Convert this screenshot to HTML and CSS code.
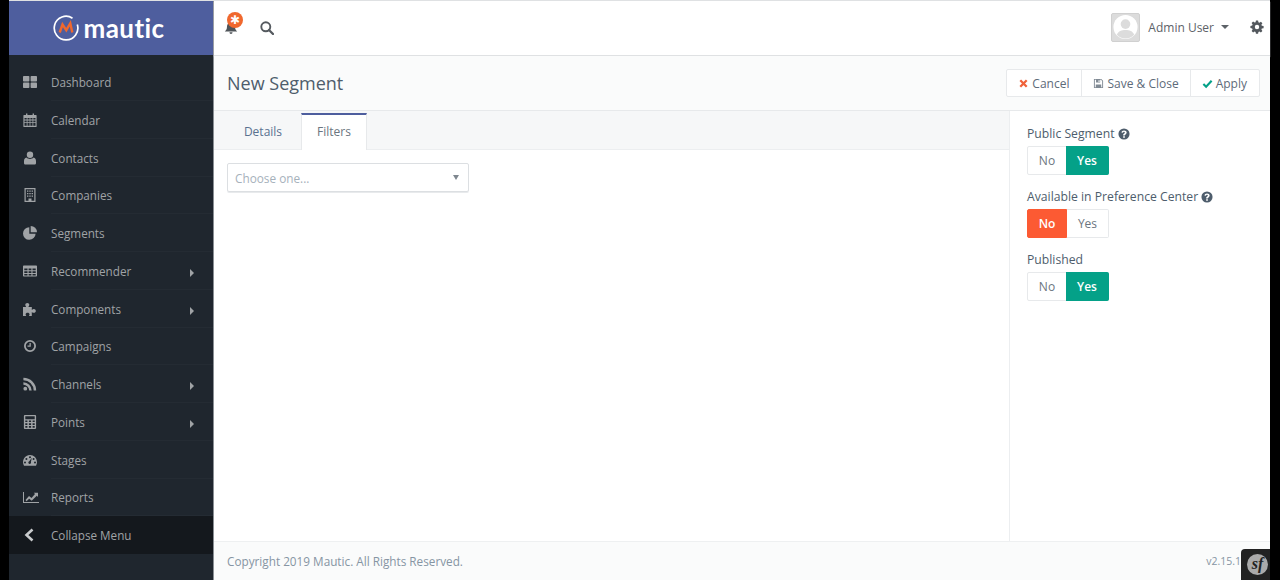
FILE: index.html
```html
<!DOCTYPE html>
<html lang="en">
<head>
<meta charset="utf-8">
<title>New Segment | Mautic</title>
<link rel="stylesheet" href="styles.css">
</head>
<body>
<svg class="sprite" width="0" height="0">
  <defs>
    <symbol id="i-dash" viewBox="0 0 14 14"><rect x="0" y="1" width="6.4" height="5.5" rx=".8"/><rect x="7.6" y="1" width="6.4" height="5.5" rx=".8"/><rect x="0" y="7.6" width="6.4" height="5.5" rx=".8"/><rect x="7.6" y="7.6" width="6.4" height="5.5" rx=".8"/></symbol>
    <symbol id="i-cal" viewBox="0 0 14 14"><path fill-rule="evenodd" d="M1 2h2V.5h1.4V2h5.2V.5H11V2h2a.6.6 0 0 1 .6.6v10.8a.6.6 0 0 1-.6.6H1a.6.6 0 0 1-.6-.6V2.600A.6.6 0 0 1 1 2zM1.500 5v1.600h2.200V5zm3 0v1.600h2.100V5zm2.900 0v1.600h2.100V5zm2.900 0v1.600h2.200V5zM1.500 7.400V9h2.200V7.400zm3 0V9h2.100V7.400zm2.900 0V9h2.100V7.400zm2.900 0V9h2.200V7.400zM1.500 9.800v2.900h2.200V9.800zm3 0v2.900h2.100V9.800zm2.900 0v2.900h2.100V9.800zm2.900 0v2.900h2.200V9.800z"/></symbol>
    <symbol id="i-user" viewBox="0 0 14 14"><circle cx="7" cy="3.800" r="3.200"/><path d="M3.400 6.600C4.400 7.700 5.600 8 7 8s2.600-.3 3.600-1.400c1.500.3 2.400 1.600 2.400 3.700v1.600c0 1-.7 1.600-1.600 1.600H2.600c-.9 0-1.600-.6-1.600-1.600v-1.600c0-2.100.9-3.400 2.400-3.700z"/></symbol>
    <symbol id="i-bld" viewBox="0 0 14 14"><path fill-rule="evenodd" d="M1.500 0h11v14h-11zM2.700 1.200v11.600h2.800v-2.300h3v2.300h2.800V1.200zM4 2.500h1.400v1.300H4zm2.300 0h1.400v1.300H6.300zm2.300 0H10v1.300H8.600zM4 5h1.400v1.300H4zm2.300 0h1.400v1.300H6.300zm2.300 0H10v1.300H8.600zM4 7.500h1.400v1.300H4zm2.300 0h1.400v1.300H6.300zm2.300 0H10v1.300H8.600z"/></symbol>
    <symbol id="i-pie" viewBox="0 0 14 14"><path d="M6.300 1.200A6.300 6.300 0 1 0 12.600 7.700H6.300z"/><path d="M7.700 0v6.300H14A6.300 6.300 0 0 0 7.700 0z"/></symbol>
    <symbol id="i-table" viewBox="0 0 14 14"><path fill-rule="evenodd" d="M.8 1.500h12.400a.8.800 0 0 1 .8.800v9.400a.8.800 0 0 1-.8.800H.8a.8.800 0 0 1-.8-.8V2.300a.8.800 0 0 1 .8-.8zM1.300 4.600v1.700h3.200V4.600zm4.300 0v1.700h2.800V4.600zm3.900 0v1.700h3.200V4.600zM1.300 7.300V9h3.200V7.300zm4.300 0V9h2.800V7.300zm3.900 0V9h3.200V7.300zM1.300 10v1.400h3.200V10zm4.300 0v1.400h2.800V10zm3.900 0v1.400h3.200V10z"/></symbol>
    <symbol id="i-puzzle" viewBox="0 0 14 14"><path d="M0 5h3.200c-.6-1-.9-1.500-.9-2.200C2.300 1.700 3.200 1 4.300 1s2 .7 2 1.800c0 .7-.4 1.200-.9 2.200h3.400v2.900c.9-.6 1.300-.9 2.100-.9 1.100 0 1.900.8 1.900 1.900s-.8 1.900-1.900 1.900c-.8 0-1.200-.3-2.100-.9V14H5.900c.5-.8.700-1.200.7-1.800 0-.9-.9-1.500-2-1.500s-2 .6-2 1.500c0 .6.200 1 .7 1.800H0z"/></symbol>
    <symbol id="i-clock" viewBox="0 0 14 14"><path fill-rule="evenodd" d="M7 1a6 6 0 1 1 0 12A6 6 0 0 1 7 1zm0 1.800a4.200 4.200 0 1 0 0 8.400 4.200 4.200 0 0 0 0-8.400zM6.500 4h1.300v3.800H4.500V6.600h2z"/></symbol>
    <symbol id="i-rss" viewBox="0 0 14 14"><circle cx="2.300" cy="11.700" r="1.900"/><path d="M.4 5.300v2.500a6 6 0 0 1 5.800 5.800h2.500A8.400 8.400 0 0 0 .4 5.300z"/><path d="M.4 .8v2.500a10.400 10.400 0 0 1 10.300 10.300h2.500A12.800 12.800 0 0 0 .4.800z"/></symbol>
    <symbol id="i-calc" viewBox="0 0 14 14"><path fill-rule="evenodd" d="M1.800 0h10.400c.5 0 .9.400.9.900v12.200c0 .5-.4.900-.9.900H1.800a.9.900 0 0 1-.9-.9V.9c0-.5.400-.9.900-.9zM2.300 1.300v2.900h9.400V1.300zM2.300 5.400v1.700h2.100V5.400zm3.600 0v1.700h2.200V5.400zm3.700 0v1.700h2.100V5.400zM2.300 8.200v1.700h2.100V8.200zm3.600 0v1.700h2.200V8.200zm3.700 0v1.700h2.100V8.200zM2.300 11v1.700h2.100V11zm3.600 0v1.700h2.200V11zm3.700 0v1.700h2.100V11z"/></symbol>
    <symbol id="i-gauge" viewBox="0 0 14 14"><path fill-rule="evenodd" d="M7 2a7 7 0 0 1 7 7c0 1.300-.3 2.400-.9 3.400-.1.200-.3.300-.6.300H1.500c-.3 0-.5-.1-.6-.3A7 7 0 0 1 7 2zM7 3.300a1 1 0 1 0 0 2 1 1 0 0 0 0-2zM3.400 5a1 1 0 1 0 0 2 1 1 0 0 0 0-2zm7.200 0a1 1 0 1 0 0 2 1 1 0 0 0 0-2zM2 8.500a1 1 0 1 0 0 2 1 1 0 0 0 0-2zm10 0a1 1 0 1 0 0 2 1 1 0 0 0 0-2zM8.800 4.700 6.300 8.300a1.300 1.300 0 1 0 1.600.8z"/></symbol>
    <symbol id="i-line" viewBox="0 0 16 14"><path d="M0 2h1v10h15v1H0z"/><path d="M2.500 10 6 6l2.500 2L12 4l-1.200-1.200H15v4.100L13.800 5.700 8.700 10.800 6.200 8.700 3.500 11.300z"/></symbol>
    <symbol id="i-cog" viewBox="0 0 14 14"><path fill-rule="evenodd" d="M5.900.5h2.200l.3 1.800 1 .4 1.500-1 1.500 1.500-1 1.500.4 1 1.800.3v2.200l-1.800.3-.4 1 1 1.500-1.500 1.500-1.500-1-1 .4-.3 1.800H5.900l-.3-1.800-1-.4-1.500 1-1.500-1.500 1-1.500-.4-1L.4 8.100V5.900l1.800-.3.4-1-1-1.500 1.500-1.500 1.500 1 1-.4zM7 4.800a2.200 2.200 0 1 0 0 4.400 2.200 2.200 0 0 0 0-4.400z"/></symbol>
    <symbol id="i-help" viewBox="0 0 14 14"><path fill-rule="evenodd" d="M7 .5a6.500 6.500 0 1 1 0 13A6.500 6.500 0 0 1 7 .5zM6 9.700v1.700h2V9.700zM7 2.800c-1.700 0-2.800.9-3 2.400l1.800.4c.1-.7.500-1.100 1.200-1.100.6 0 1 .3 1 .8 0 .4-.2.700-.8 1.100C6.300 7 6 7.500 6 8.400v.4h2v-.3c0-.4.200-.6.800-1 .9-.6 1.300-1.300 1.300-2.200 0-1.500-1.300-2.500-3.100-2.500z"/></symbol>
  </defs>
</svg>
<div class="app">
  <aside class="sidebar">
    <div class="brand">
      <svg class="brand-mark" viewBox="0 0 26 26" width="26" height="26" aria-hidden="true">
        <path d="M19.500 3.200A11.800 11.800 0 1 0 24.300 9.500" fill="none" stroke="#fff" stroke-width="1.700"/>
        <path d="M6.700 17.500 9.500 9.500l3.800 5.700 4-7 2 9.300" fill="none" stroke="#f0682e" stroke-width="2.400"/>
      </svg>
      <span class="brand-name">mautic</span>
    </div>
    <nav class="nav">
      <a class="nav-item"><svg class="nav-icon"><use href="#i-dash"/></svg><span class="nav-label">Dashboard</span></a>
      <a class="nav-item"><svg class="nav-icon"><use href="#i-cal"/></svg><span class="nav-label">Calendar</span></a>
      <a class="nav-item"><svg class="nav-icon"><use href="#i-user"/></svg><span class="nav-label">Contacts</span></a>
      <a class="nav-item"><svg class="nav-icon"><use href="#i-bld"/></svg><span class="nav-label">Companies</span></a>
      <a class="nav-item"><svg class="nav-icon"><use href="#i-pie"/></svg><span class="nav-label">Segments</span></a>
      <a class="nav-item has-sub"><svg class="nav-icon"><use href="#i-table"/></svg><span class="nav-label">Recommender</span></a>
      <a class="nav-item has-sub"><svg class="nav-icon"><use href="#i-puzzle"/></svg><span class="nav-label">Components</span></a>
      <a class="nav-item"><svg class="nav-icon"><use href="#i-clock"/></svg><span class="nav-label">Campaigns</span></a>
      <a class="nav-item has-sub"><svg class="nav-icon"><use href="#i-rss"/></svg><span class="nav-label">Channels</span></a>
      <a class="nav-item has-sub"><svg class="nav-icon"><use href="#i-calc"/></svg><span class="nav-label">Points</span></a>
      <a class="nav-item"><svg class="nav-icon"><use href="#i-gauge"/></svg><span class="nav-label">Stages</span></a>
      <a class="nav-item"><svg class="nav-icon nav-icon-wide"><use href="#i-line"/></svg><span class="nav-label">Reports</span></a>
      <a class="nav-item nav-collapse"><svg class="nav-icon" viewBox="0 0 14 14"><path d="M9.500 1.500 3.500 7l6 5.500" fill="none" stroke="#c9cbcd" stroke-width="2.600"/></svg><span class="nav-label">Collapse Menu</span></a>
    </nav>
  </aside>
  <div class="main">
    <header class="topbar">
      <div class="top-left">
        <span class="bell">
          <svg viewBox="0 0 14 14" width="14" height="14" aria-hidden="true"><path d="M7 1.500c2.700 0 4 1.700 4 4 0 2.500.8 3.800 2.200 5H.8C2.200 9.300 3 8 3 5.500c0-2.300 1.300-4 4-4zM5.500 11.300h3c0 1-.6 1.700-1.500 1.700s-1.500-.7-1.500-1.700z"/></svg>
          <span class="bell-badge">✱</span>
        </span>
        <svg class="search" viewBox="0 0 14 14" width="14" height="14" aria-hidden="true"><circle cx="5.800" cy="5.800" r="4.500" fill="none" stroke="currentColor" stroke-width="1.900"/><path d="m9 9 4 4" stroke="currentColor" stroke-width="2.300" stroke-linecap="round"/></svg>
      </div>
      <div class="top-right">
        <span class="avatar"><svg viewBox="0 0 28 28" width="28" height="28" aria-hidden="true"><circle cx="14" cy="14" r="12.500" fill="#fff"/><circle cx="14" cy="11" r="5" fill="#dcdcdc"/><path d="M5 22c1.500-4 5-5 9-5s7.500 1 9 5c-2 2.500-5.500 4-9 4s-7-1.500-9-4z" fill="#dcdcdc"/></svg></span>
        <span class="user-name">Admin User</span>
        <span class="caret"></span>
        <svg class="cog"><use href="#i-cog"/></svg>
      </div>
    </header>
    <div class="page-head">
      <h1 class="page-title">New Segment</h1>
      <div class="btn-group">
        <button class="btn"><svg class="btn-icon" viewBox="0 0 12 12"><path d="M2.500 2.500l7 7m0-7-7 7" stroke="#f0623a" stroke-width="2.500" fill="none"/></svg>Cancel</button>
        <button class="btn"><svg class="btn-icon" viewBox="0 0 12 12"><path d="M1 1h8l2 2v8H1zM2 2v8h8V3.400L8.600 2zM3 7h6v3H3zM3.300 2v2.800h4.500V2zM6 2.500h1.200v1.800H6z" fill="#808a94" fill-rule="evenodd"/></svg>Save &amp; Close</button>
        <button class="btn"><svg class="btn-icon" viewBox="0 0 12 12"><path d="M1.500 6.500 4.500 9.500l6-6.500" stroke="#04a188" stroke-width="2.300" fill="none"/></svg>Apply</button>
      </div>
    </div>
    <div class="content">
      <section class="editor">
        <div class="tabs">
          <a class="tab">Details</a>
          <a class="tab tab-active">Filters</a>
        </div>
        <div class="editor-body">
          <div class="select"><span>Choose one...</span><i class="select-arrow"></i></div>
        </div>
      </section>
      <aside class="options">
        <div class="field">
          <div class="field-label">Public Segment <svg class="help"><use href="#i-help"/></svg></div>
          <div class="toggle"><span class="toggle-opt toggle-no">No</span><span class="toggle-opt toggle-yes on-green">Yes</span></div>
        </div>
        <div class="field">
          <div class="field-label">Available in Preference Center <svg class="help"><use href="#i-help"/></svg></div>
          <div class="toggle"><span class="toggle-opt toggle-no on-red">No</span><span class="toggle-opt toggle-yes">Yes</span></div>
        </div>
        <div class="field">
          <div class="field-label">Published</div>
          <div class="toggle"><span class="toggle-opt toggle-no">No</span><span class="toggle-opt toggle-yes on-green">Yes</span></div>
        </div>
      </aside>
    </div>
    <footer class="footer">
      <span>Copyright 2019 Mautic. All Rights Reserved.</span>
      <span class="version">v2.15.1</span>
    </footer>
    <div class="sf-toolbar"><span class="sf-logo">sf</span></div>
  </div>
</div>
</body>
</html>
```
FILE: styles.css
```css
* { box-sizing: border-box; }
html, body { margin: 0; height: 100%; }
body {
  background: #000;
  font-family: "Open Sans", "Liberation Sans", sans-serif;
  font-size: 12px;
  overflow: hidden;
}
.sprite { position: absolute; }
.app {
  display: flex;
  height: 580px;
  margin: 0 10px 0 9px;
  border-top: 1px solid #dfe1e3;
}
.sidebar {
  width: 205px;
  flex: none;
  background: #1f262e;
  border-right: 1px solid #8a8f94;
}
.brand {
  height: 54px;
  background: #4e5e9e;
  display: flex;
  align-items: center;
  justify-content: center;
  gap: 5px;
  padding-right: 5px;
}
.brand-mark { flex: none; }
.brand-name {
  font-family: "Lato", sans-serif;
  font-weight: 700;
  font-size: 26px;
  line-height: 26px;
  color: #fff;
  letter-spacing: .4px;
}
.nav { padding-top: 8.25px; }
.nav-item {
  position: relative;
  display: flex;
  align-items: center;
  height: 37.75px;
  padding-left: 14px;
  color: #a0a3a6;
  font-size: 11.7px;
}
.nav-item::after {
  content: "";
  position: absolute;
  left: 42px;
  right: 0;
  bottom: 0;
  height: 1px;
  background: #242b33;
}
.nav-collapse { background: #14181d; }
.nav-collapse::after { display: none; }
.nav-icon {
  width: 14px;
  height: 14px;
  flex: none;
  fill: #a0a3a6;
  margin-right: 14px;
}
.nav-icon-wide { width: 16px; margin-right: 12px; }
.has-sub::before {
  content: "";
  position: absolute;
  left: 181px;
  top: 17px;
  border-left: 4px solid #a0a3a6;
  border-top: 4px solid transparent;
  border-bottom: 4px solid transparent;
}
.main {
  position: relative;
  flex: 1;
  min-width: 0;
  display: flex;
  flex-direction: column;
  background: #fff;
}
.topbar {
  height: 55px;
  flex: none;
  display: flex;
  align-items: center;
  justify-content: space-between;
  background: #fff;
  border-bottom: 1px solid #dfe1e3;
  box-shadow: 0 1px 1px #eceef0;
  padding: 0 6px 0 10px;
}
.top-left { display: flex; align-items: center; gap: 22px; }
.bell {
  position: relative;
  width: 14px;
  height: 14px;
  fill: #4f5459;
  display: block;
}
.bell svg { display: block; }
.bell-badge {
  position: absolute;
  left: 3px;
  top: -9px;
  width: 16px;
  height: 16px;
  border-radius: 50%;
  background: #f0682e;
  color: #fff;
  font-size: 12px;
  line-height: 16px;
  text-align: center;
}
.search { color: #555a5f; }
.top-right { display: flex; align-items: center; padding-bottom: 2px; }
.avatar {
  width: 29px;
  height: 29px;
  display: flex;
  align-items: center;
  justify-content: center;
  background: #dcdcdc;
  border: 1px solid #d0d0d0;
  border-radius: 2px;
  overflow: hidden;
}
.user-name { margin-left: 8px; color: #5d6268; font-size: 12px; }
.caret {
  margin-left: 7px;
  border-top: 4px solid #5d6268;
  border-left: 4px solid transparent;
  border-right: 4px solid transparent;
}
.cog { width: 14px; height: 14px; fill: #53585d; margin-left: 21px; }
.page-head {
  height: 55px;
  flex: none;
  display: flex;
  align-items: center;
  justify-content: space-between;
  padding: 0 10px 0 13px;
  background: #fafbfb;
  border-bottom: 1px solid #e7e9eb;
}
.page-title {
  margin: 0;
  font-size: 18px;
  font-weight: 400;
  color: #4e5d6c;
}
.btn-group { display: flex; }
.btn {
  height: 28px;
  display: flex;
  align-items: center;
  padding: 0 11px;
  margin-left: -1px;
  background: #fff;
  border: 1px solid #e7e9eb;
  color: #5d6b79;
  font: 400 12px "Open Sans", sans-serif;
}
.btn:first-child { border-radius: 2px 0 0 2px; padding-right: 12px; }
.btn:last-child { border-radius: 0 2px 2px 0; padding-right: 12px; }
.btn-icon { width: 11px; height: 11px; margin-right: 3px; flex: none; }
.content { flex: 1; display: flex; min-height: 0; }
.editor { flex: 1; min-width: 0; display: flex; flex-direction: column; }
.tabs {
  height: 39px;
  flex: none;
  display: flex;
  align-items: flex-end;
  padding-left: 13px;
  background: #f6f7f8;
  border-bottom: 1px solid #eceef0;
}
.tab {
  height: 36px;
  width: 74px;
  margin-bottom: -1px;
  display: flex;
  align-items: center;
  justify-content: center;
  color: #5a7190;
  font-size: 12px;
  padding: 0 2px 2px 0;
}
.tab-active {
  width: 66px;
  height: 37px;
  padding-right: 0;
  background: #fff;
  color: #6b7580;
  border-top: 2px solid #4e5e9e;
  border-left: 1px solid #e7e9eb;
  border-right: 1px solid #e7e9eb;
}
.editor-body { flex: 1; padding: 13px; }
.select {
  width: 242px;
  height: 29px;
  display: flex;
  align-items: center;
  justify-content: space-between;
  padding: 0 9px 0 7px;
  border: 1px solid #dcdfe2;
  border-radius: 2px;
  box-shadow: 0 1px 0 #e8eaec;
  color: #a6b1bb;
  font-size: 11.8px;
}
.select-arrow {
  border-top: 5px solid #7f878f;
  border-left: 3px solid transparent;
  border-right: 3px solid transparent;
}
.options {
  width: 261px;
  flex: none;
  border-left: 1px solid #eceef0;
  padding: 14px 17px;
  display: flex;
  flex-direction: column;
  gap: 13px;
}
.field-label {
  display: flex;
  align-items: center;
  gap: 3px;
  height: 17px;
  margin-bottom: 4px;
  color: #4e5d6c;
  font-size: 12.2px;
}
.help { width: 12px; height: 12px; fill: #4e5d6c; }
.toggle { display: flex; width: 82px; height: 29px; }
.toggle-opt {
  display: flex;
  align-items: center;
  justify-content: center;
  font-size: 12px;
  color: #6b7580;
  background: #fff;
  border: 1px solid #e7e9eb;
}
.toggle-no { width: 40px; border-radius: 2px 0 0 2px; }
.toggle-yes { flex: 1; border-left: 0; border-radius: 0 2px 2px 0; }
.on-green { background: #04a188; border-color: #04a188; color: #fff; font-weight: 600; margin-left: -1px; }
.on-red { background: #fc5a33; border-color: #fc5a33; color: #fff; font-weight: 600; }
.footer {
  height: 39px;
  flex: none;
  display: flex;
  align-items: center;
  justify-content: space-between;
  padding: 0 29px 0 13px;
  background: #fafbfb;
  border-top: 1px solid #eef0f1;
  color: #8695a3;
  font-size: 11.75px;
}
.version { font-size: 10.5px; }
.sf-toolbar {
  position: absolute;
  right: 0;
  bottom: 0;
  width: 29px;
  height: 31px;
  padding-left: 6px;
  background: #222;
  border-top-left-radius: 4px;
  display: flex;
  align-items: center;
}
.sf-logo {
  width: 21px;
  height: 21px;
  border-radius: 50%;
  background: #aaa;
  color: #222;
  font: italic 700 16px/20px "Liberation Serif", serif;
  text-align: center;
}
```
